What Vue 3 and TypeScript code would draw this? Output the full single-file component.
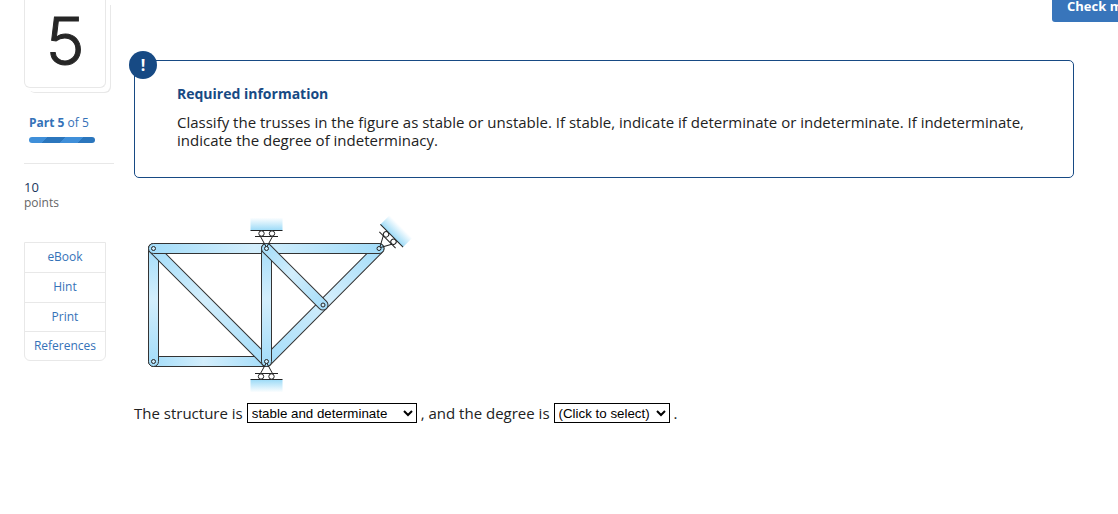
<script setup lang="ts">
interface Point {
  x: number
  y: number
}

interface Bar {
  id: string
  from: Point
  to: Point
}

const pins: Record<string, Point> = {
  a: { x: 14.5, y: 38.5 },
  b: { x: 127.5, y: 38.5 },
  c: { x: 240, y: 38.5 },
  d: { x: 184, y: 95 },
  e: { x: 127.5, y: 151.5 },
  f: { x: 14.5, y: 151.5 },
}

const bars: Bar[] = [
  { id: 'fe', from: pins.f, to: pins.e },
  { id: 'af', from: pins.a, to: pins.f },
  { id: 'ae', from: pins.a, to: pins.e },
  { id: 'ce', from: pins.c, to: pins.e },
  { id: 'ac', from: pins.a, to: pins.c },
  { id: 'be', from: pins.b, to: pins.e },
  { id: 'bd', from: pins.b, to: pins.d },
]

const supports = [
  { id: 'top', at: pins.b, angle: 0 },
  { id: 'corner', at: pins.c, angle: 45 },
  { id: 'bottom', at: pins.e, angle: 180 },
]

const barLength = (bar: Bar) => Math.hypot(bar.to.x - bar.from.x, bar.to.y - bar.from.y) + 10

const barTransform = (bar: Bar) => {
  const angle = (Math.atan2(bar.to.y - bar.from.y, bar.to.x - bar.from.x) * 180) / Math.PI
  return `translate(${bar.from.x} ${bar.from.y}) rotate(${angle})`
}

const links = ['eBook', 'Hint', 'Print', 'References']
</script>

<template>
  <div class="page">
    <button class="check" type="button">Check my work</button>

    <aside class="sidebar">
      <div class="number">5</div>
      <div class="part"><b>Part 5</b> of 5</div>
      <div class="progress" role="progressbar" aria-label="Part 5 of 5"></div>
      <div class="points">
        <div class="score">10</div>
        <div>points</div>
      </div>
      <nav class="links">
        <a v-for="link in links" :key="link" href="#">{{ link }}</a>
      </nav>
    </aside>

    <main class="content">
      <section class="info">
        <span class="badge" aria-hidden="true">!</span>
        <h2>Required information</h2>
        <p>
          Classify the trusses in the figure as stable or unstable. If stable, indicate if
          determinate or indeterminate. If indeterminate, indicate the degree of indeterminacy.
        </p>
      </section>

      <svg class="truss" width="280" height="190" viewBox="0 0 280 190" role="img" aria-label="Truss">
        <defs>
          <linearGradient id="steel">
            <stop offset="0" stop-color="#a2dcf9" />
            <stop offset="0.45" stop-color="#d3eefc" />
            <stop offset="1" stop-color="#a2dcf9" />
          </linearGradient>
          <linearGradient id="ground" x1="0" y1="1" x2="0" y2="0">
            <stop offset="0" stop-color="#9bdaf7" />
            <stop offset="1" stop-color="#ffffff" />
          </linearGradient>
        </defs>
        <rect
          v-for="bar in bars"
          :key="bar.id"
          class="bar"
          x="-5"
          y="-5"
          :width="barLength(bar)"
          height="10"
          rx="5"
          :transform="barTransform(bar)"
        />
        <g
          v-for="support in supports"
          :key="support.id"
          :transform="`translate(${support.at.x} ${support.at.y}) rotate(${support.angle})`"
        >
          <rect x="-16" y="-31" width="32" height="13" fill="url(#ground)" />
          <path class="line" d="M-16 -18H16" />
          <path class="line" d="M-11.5 -12H11.5M-6 -12L0 -1L6 -12" />
          <circle class="roller" cx="-5" cy="-15" r="2.7" />
          <circle class="roller" cx="5.5" cy="-15" r="2.7" />
        </g>
        <circle v-for="(pin, id) in pins" :key="id" class="pin" :cx="pin.x" :cy="pin.y" r="2" />
      </svg>

      <div class="answer">
        <label for="kind">The structure is</label>
        <select id="kind" class="kind">
          <option>stable and determinate</option>
          <option>stable and indeterminate</option>
          <option>unstable</option>
        </select>
        <label for="degree">, and the degree is</label>
        <select id="degree" class="degree">
          <option>(Click to select)</option>
          <option>first</option>
          <option>second</option>
        </select>
        <span>.</span>
      </div>
    </main>
  </div>
</template>

<style>
body {
  margin: 0;
  background: #fff;
}
</style>

<style scoped>
.page {
  position: relative;
  display: flex;
  gap: 20px;
  min-height: 100vh;
  padding: 0 44px 0 24px;
  box-sizing: border-box;
  overflow: hidden;
  color: #222;
  font: 15px/18px "Open Sans", "Noto Sans", sans-serif;
}

.check {
  position: absolute;
  top: -16px;
  right: -72px;
  width: 138px;
  height: 38px;
  padding: 6px 15px 0;
  border: 0;
  border-radius: 3px;
  background: #3875bb;
  color: #fff;
  font: bold 13px/18px "Open Sans", "Noto Sans", sans-serif;
  text-align: left;
}

.sidebar {
  flex: 0 0 90px;
  color: #666;
  font-size: 12px;
  line-height: 16px;
}

.number {
  width: 80px;
  height: 87px;
  border: 1px solid #e8e8e8;
  border-top: 0;
  border-radius: 0 0 6px 6px;
  box-shadow: 4px 4px 0 0 #fff, 5px 5px 0 0 #e8e8e8;
  color: #262626;
  font: 300 66px/82px Inter, sans-serif;
  -webkit-text-stroke: 1px #262626;
  text-align: center;
}

.part {
  margin: 27px 0 0 5px;
  color: #3572b8;
}

.progress {
  width: 66px;
  height: 6px;
  margin: 6px 0 20px 5px;
  border-radius: 3px;
  background: linear-gradient(135deg, #3f8fd9 25%, #2b76bd 25% 50%, #3f8fd9 50% 75%, #2b76bd 75%) 0 0 / 36px 36px;
}

.points {
  padding-top: 15px;
  border-top: 1px solid #e8e8e8;
}

.score {
  color: #1b365d;
  font-size: 13px;
}

.links {
  display: grid;
  grid-auto-rows: 1fr;
  width: 80px;
  height: 117px;
  margin-top: 31px;
  border: 1px solid #e8e8e8;
  border-radius: 0 0 6px 6px;
}

.links a {
  color: #3572b8;
  line-height: 28px;
  text-align: center;
  text-decoration: none;
}

.links a + a {
  border-top: 1px solid #e8e8e8;
}

.content {
  flex: 1;
  min-width: 0;
  padding-top: 60px;
}

.info {
  position: relative;
  padding: 24px 42px 28px;
  border: 1px solid #174a84;
  border-radius: 5px;
}

.badge {
  position: absolute;
  top: -10px;
  left: -6px;
  width: 28px;
  height: 28px;
  border-radius: 50%;
  background: #174a84;
  color: #fff;
  font-size: 16px;
  font-weight: bold;
  line-height: 28px;
  text-align: center;
}

.info h2 {
  margin: 0 0 10px;
  color: #174a84;
  font-size: 14px;
  line-height: 18px;
}

.info p {
  margin: 0;
}

.truss {
  display: block;
  margin: 32px 0 0 5px;
}

.bar {
  fill: url(#steel);
  stroke: #333;
}

.line,
.roller,
.pin {
  fill: none;
  stroke: #222;
}

.roller {
  fill: #fff;
}

.pin {
  fill: #cdebfb;
}

.answer {
  display: flex;
  align-items: center;
  gap: 4px;
  margin-top: 3px;
}

.answer select {
  height: 20px;
  padding: 0;
  border: 1px solid #000;
  border-radius: 0;
  background-color: #fff;
  color: #000;
  font-family: "Liberation Sans", Arial, sans-serif;
}

.kind {
  width: 170px;
}

.degree {
  width: 116px;
}
</style>
